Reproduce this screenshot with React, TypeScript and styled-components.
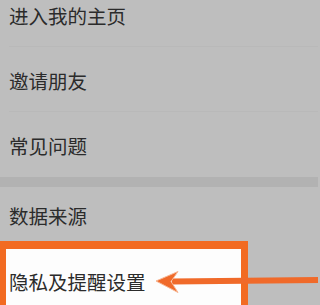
import styled, { createGlobalStyle } from 'styled-components';

const GlobalStyle = createGlobalStyle`
  html, body {
    margin: 0;
    padding: 0;
    background: #bebebe;
    overflow: hidden;
  }
`;

const Page = styled.div`
  width: 318px;
  height: 305px;
  overflow: hidden;
  background: #bebebe;
  font-family: 'Noto Sans CJK SC', 'Noto Sans', sans-serif;
`;

const List = styled.div`
  display: flex;
  flex-direction: column;
  margin-top: -18px;
`;

const Row = styled.div<{ $height?: number; $divider?: boolean }>`
  height: ${(p) => p.$height ?? 65}px;
  display: flex;
  align-items: center;
  padding: 2px 0 0 9px;
  box-sizing: border-box;
  font-size: 19.5px;
  color: #2b2b2b;
  position: relative;

  &::after {
    content: '';
    display: ${(p) => (p.$divider ? 'block' : 'none')};
    position: absolute;
    left: 9px;
    right: 0;
    bottom: 0;
    height: 1px;
    background: #b9b9b9;
  }
`;

const SectionGap = styled.div`
  height: 10px;
  background: #b2b2b2;
`;

const HighlightArea = styled.div`
  position: relative;
  height: 70px;
`;

const HighlightBox = styled.div`
  width: 248px;
  height: 100%;
  box-sizing: border-box;
  border: 7px solid #f26b22;
  border-top-width: 8px;
  border-bottom: none;
  border-left-width: 6px;
  background: #fdfdfd;
  display: flex;
  align-items: flex-start;
  padding: 18px 0 0 3px;
  font-size: 19.5px;
  color: #2b2b2b;
`;

const Arrow = styled.svg`
  position: absolute;
  left: 150px;
  top: 24px;
`;

const items = ['进入我的主页', '邀请朋友', '常见问题'];

export default function App() {
  return (
    <Page>
      <GlobalStyle />
      <List>
        {items.map((label, i) => (
          <Row key={label} $divider={i < items.length - 1}>
            {label}
          </Row>
        ))}
        <SectionGap />
        <Row $height={54}>数据来源</Row>
        <HighlightArea>
          <HighlightBox>隐私及提醒设置</HighlightBox>
          <Arrow width="168" height="35" viewBox="0 0 168 35">
            <path d="M22 13.5 L168 12 L168 18 L22 19.5 Z" fill="#f06a2a" />
            <path
              d="M6 16 L28 6.5 L21 16.5 L28 27.5 Z"
              fill="#f06a2a"
              stroke="#f7b896"
              strokeWidth="1"
              strokeLinejoin="round"
            />
          </Arrow>
        </HighlightArea>
      </List>
    </Page>
  );
}
